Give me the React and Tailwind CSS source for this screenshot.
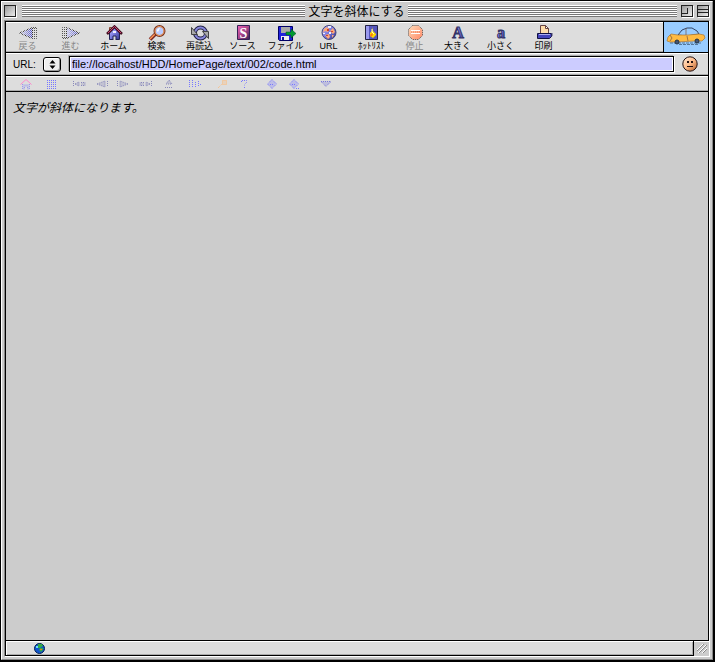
import React from "react";

const ja = "font-['Liberation_Sans','Noto_Sans_CJK_JP',sans-serif]";

// one pixel checkerboard and the gradients shared by the icons
function Patterns() {
  return (
    <svg className="absolute h-0 w-0" aria-hidden="true">
      <defs>
        <pattern id="dither" width="2" height="2" patternUnits="userSpaceOnUse">
          <rect width="1" height="1" fill="#ddd" />
          <rect x="1" y="1" width="1" height="1" fill="#ddd" />
        </pattern>
        <linearGradient id="arrowLeft">
          <stop offset="0" stopColor="#eef" />
          <stop offset="1" stopColor="#44c" />
        </linearGradient>
        <linearGradient id="arrowRight">
          <stop offset="0" stopColor="#ccf" />
          <stop offset="1" stopColor="#44c" />
        </linearGradient>
        <linearGradient id="blue" x2="1" y2="1">
          <stop offset="0" stopColor="#bbf" />
          <stop offset="0.5" stopColor="#77d" />
          <stop offset="1" stopColor="#338" />
        </linearGradient>
        <linearGradient id="plum" x2="1" y2="1">
          <stop offset="0" stopColor="#e6b" />
          <stop offset="0.5" stopColor="#a48" />
          <stop offset="1" stopColor="#325" />
        </linearGradient>
        <linearGradient id="red" x2="1" y2="1">
          <stop offset="0" stopColor="#fdb" />
          <stop offset="1" stopColor="#f86" />
        </linearGradient>
        <linearGradient id="skin" x2="1" y2="1">
          <stop offset="0" stopColor="#fed" />
          <stop offset="0.5" stopColor="#fb8" />
          <stop offset="1" stopColor="#a52" />
        </linearGradient>
      </defs>
    </svg>
  );
}

function Icon({ children, dither }) {
  return (
    <svg className="block h-4 w-5 shrink-0" viewBox="0 0 20 16" aria-hidden="true">
      {children}
      {dither && <rect width="20" height="16" fill="url(#dither)" shapeRendering="crispEdges" />}
    </svg>
  );
}

const tools = [
  {
    label: "戻る",
    off: true,
    dither: true,
    icon: (
      <>
        <path d="M1.500 8L14.500 2.500V13.500Z" fill="url(#arrowLeft)" stroke="#333" />
        <path d="M14 2.500h4.500v11H14M16.500 3v10" fill="none" stroke="#555" />
      </>
    ),
  },
  {
    label: "進む",
    off: true,
    dither: true,
    icon: (
      <>
        <path d="M18.500 8L5.500 2.500V13.500Z" fill="url(#arrowRight)" stroke="#333" />
        <path d="M6 2.500H1.500v11H6M3.500 3v10" fill="none" stroke="#555" />
      </>
    ),
  },
  {
    label: "ホーム",
    icon: (
      <>
        <path d="M5.500 2.500h2v4h-2z" fill="#db8" stroke="#843" />
        <path d="M5.500 8l5-5 5 5v6.500h-10z" fill="url(#blue)" stroke="#225" />
        <path d="M3 9L10.500 1.500 18 9" fill="none" stroke="#412" strokeWidth="2.500" />
        <path d="M4 8L10.500 1.500 17 8" fill="none" stroke="#c47" />
        <path d="M9 15v-4h3v4" fill="#ddd" stroke="#225" />
        <path d="M9 6h3v2H9z" fill="#eef" />
      </>
    ),
  },
  {
    label: "検索",
    icon: (
      <>
        <path d="M3 14.500L9 8.500" stroke="#722" strokeWidth="3.500" />
        <path d="M3 14L8.500 8.500" stroke="#f95" strokeWidth="1.500" />
        <circle cx="12.500" cy="6" r="5" fill="#bcf" stroke="#732" strokeWidth="2" />
        <circle cx="12.500" cy="6" r="4.500" fill="none" stroke="#fa6" />
        <path d="M10 6c0-2 1-3 3-3l-2 4z" fill="#fff" />
      </>
    ),
  },
  {
    label: "再読込",
    icon: (
      <>
        <circle cx="10.500" cy="8" r="5.500" fill="none" stroke="#224" strokeWidth="4" />
        <circle cx="10.500" cy="8" r="5.500" fill="none" stroke="#88d" strokeWidth="2" />
        <path d="M1.500 2.500v7h6z" fill="#aaa" stroke="#444" />
        <path d="M18.500 13.500v-7h-6z" fill="#aaa" stroke="#444" />
      </>
    ),
  },
  {
    label: "ソース",
    icon: (
      <>
        <path d="M4.500 0.500h12v14h-12z" fill="url(#plum)" stroke="#325" />
        <text x="10.500" y="12.500" fontSize="14" fontWeight="bold" textAnchor="middle" fill="#fff" className="font-['Liberation_Serif',serif]">
          S
        </text>
      </>
    ),
  },
  {
    label: "ファイル",
    icon: (
      <>
        <path d="M2.500 1.500h14v14h-13l-1-1z" fill="#22d" stroke="#006" />
        <path d="M5 2h9v6H5z" fill="#aaa" />
        <path d="M5 11h8v4H5z" fill="#eee" />
        <path d="M6 12h2v3H6z" fill="#119" />
        <path d="M10 7h5V4l5 4.500-5 4.500v-3h-5z" fill="#093" stroke="#042" strokeWidth="0.500" />
      </>
    ),
  },
  {
    label: "URL",
    icon: (
      <>
        <circle cx="10" cy="7.500" r="7" fill="url(#blue)" stroke="#447" />
        <path d="M5 4l3-2 2 2-1 3-3-1-2 2zM11 6l3-3 2 4-2 2zM6 10l4-1 1 3-2 2zM13 10h2l-2 3z" fill="#fa7" />
        <path d="M8 4h2v2H8zM12 6h2v1h-2zM7 10h2v1H7z" fill="#c43" />
        <path d="M9 1h3v2H9zM4 8h2v1H4zM10 7h2v2h-2z" fill="#eef" />
      </>
    ),
  },
  {
    label: "ﾎｯﾄﾘｽﾄ",
    icon: (
      <>
        <path d="M3.500 0.500h12v14h-12z" fill="#55b" stroke="#224" />
        <path d="M4 1h3v13H4z" fill="#99e" />
        <path d="M10 2l1 4 3 3v1l-3 3-3-2V8l2-2z" fill="#fd0" />
        <path d="M10 8l1 2-2 2-1-2z" fill="#f71" />
        <path d="M10 4v3l2 2" stroke="#ffb" fill="none" />
      </>
    ),
  },
  {
    label: "停止",
    off: true,
    icon: (
      <>
        <path d="M7.500 0.500h6l4 4v6l-4 4h-6l-4-4v-6z" fill="url(#red)" stroke="#555" strokeDasharray="1 1" />
        <path d="M6 5.500h9M6 8.500h9" stroke="#fff" />
        <path d="M6 7h9" stroke="#e75" strokeDasharray="1 1" />
      </>
    ),
  },
  {
    label: "大きく",
    icon: (
      <text x="10" y="13" fontSize="16" fontWeight="bold" textAnchor="middle" fill="url(#blue)" stroke="#336" className="font-['Liberation_Serif',serif]">
        A
      </text>
    ),
  },
  {
    label: "小さく",
    icon: (
      <text x="10" y="13" fontSize="16" fontWeight="bold" textAnchor="middle" fill="url(#blue)" stroke="#336" className="font-['Liberation_Serif',serif]">
        a
      </text>
    ),
  },
  {
    label: "印刷",
    icon: (
      <>
        <path d="M6.500 0.500h5l3 3v6h-8z" fill="#fda" stroke="#644" />
        <path d="M11.500 0.500v3h3z" fill="#fff" stroke="#644" />
        <path d="M3.500 8.500h14v3l-2 2h-12z" fill="#44b" stroke="#114" />
        <path d="M5 9h11v1H5z" fill="#aae" />
        <path d="M18 8v3" stroke="#447" />
      </>
    ),
  },
];

const marks = [
  { name: "Home", pos: "ml-[10px]", d: "M6.500 8v5h2v-3h3v3h2V8", roof: "M4.500 8.500l5.500-5 5.500 5", c: "#99e" },
  { name: "Index", pos: "ml-[5px]", d: "M6 4.500h9M6 6.500h9M6 8.500h9M6 10.500h9M6 12.500h9", c: "#77f" },
  { name: "First", pos: "ml-[8px]", d: "M4.500 5v6M6 8l4-2v4zM12 6.500h4v3h-4", c: "#88b" },
  { name: "Previous", pos: "ml-[3px]", d: "M5 8l8-3v6zM15.500 5v6", c: "#88b" },
  { name: "Next", pos: "ml-px", d: "M4.500 5v6M15 8L7 5v6z", c: "#88b" },
  { name: "Last", pos: "ml-[3px]", d: "M15.500 5v6M14 8l-4-2v4zM8 6.500H4v3h4", c: "#88b" },
  { name: "Up", pos: "ml-[3px]", d: "M10 4l3 4H7zM6 11.500h8", c: "#88b" },
  { name: "Title", pos: "ml-[6px]", d: "M4.500 4v8M7.500 4v8M10.500 6v5M13.500 5v6M15 8.500h2", c: "#77f" },
  { name: "Search", pos: "ml-[8px]", d: "M5 12l4-4M9.500 4.500h4v4h-4z", c: "#fb7" },
  { name: "Help", pos: "ml-px", d: "M7.500 6V4.500h5v2l-2 2v1M10.500 11v2", c: "#77f", line: true },
  { name: "Contents", pos: "ml-[8px]", d: "M10 3.500l4.500 4.500-4.500 4.500-4.500-4.500zM8 8.500h4", c: "#77f" },
  { name: "Glossary", pos: "ml-[2px]", d: "M10 3.500l4.500 4.500-4.500 4.500-4.500-4.500zM8 8.500h4M12 12.500h3", c: "#77f" },
  { name: "More", pos: "ml-[12px]", d: "M5 5.500h10l-5 5z", c: "#77d" },
];

function Mark({ mark }) {
  return (
    <Icon>
      <path
        d={mark.d}
        fill={mark.line ? "none" : mark.c}
        fillOpacity="0.300"
        stroke={mark.c}
        strokeDasharray="1 1"
      />
      {mark.roof && <path d={mark.roof} fill="none" stroke="#f8c" />}
    </Icon>
  );
}

function Stripes() {
  return (
    <div className="h-3 flex-1 bg-[repeating-linear-gradient(to_bottom,#fff_0px,#fff_1px,#777_1px,#777_2px)]" />
  );
}

function TitleBar() {
  const box =
    "h-3 w-3 shrink-0 border border-[#222] bg-linear-to-br from-[#999] to-[#eee] shadow-[1px_1px_0_#fff]";
  return (
    <header className="flex h-[18px] items-center pr-[3px] pl-[2px]">
      <div className="flex flex-1 items-center gap-[6px]">
        <button aria-label="Close" className={box} />
        <Stripes />
      </div>
      <h1 className="px-[3px] pt-px text-[12px] leading-4 whitespace-nowrap">文字を斜体にする</h1>
      <div className="flex flex-1 items-center gap-1">
        <Stripes />
        <button aria-label="Zoom" className={box}>
          <span className="block h-[6px] w-[6px] border-r border-b border-[#222]" />
        </button>
        <button aria-label="Collapse" className={box + " flex items-center"}>
          <span className="block h-[4px] w-full border-y border-[#222]" />
        </button>
      </div>
    </header>
  );
}

function Car() {
  return (
    <svg className="h-7 w-[42px]" viewBox="0 0 42 28" aria-hidden="true">
      <path d="M5 20h32M14 21.500h20" stroke="#579" strokeDasharray="3 1" />
      <path d="M13 12l4-5 5-2h5l5 3 2 3-12 2z" fill="#9cf" stroke="#346" />
      <path d="M2 18l1-4 3-3 7 1 10 0 11-1 5 1 1 3-3 3-7 0-19 1-6 0z" fill="#fb4" stroke="#a73" strokeWidth="0.700" />
      <path d="M21 5v7M5 12l2 3-2 3M22 13l1 5" stroke="#754" strokeWidth="0.700" fill="none" />
      <circle cx="12" cy="19" r="2" fill="#457" stroke="#234" />
      <circle cx="32" cy="18" r="2" fill="#457" stroke="#234" />
    </svg>
  );
}

const bar = "border-b border-b-black bg-[#ddd] shadow-[inset_0_1px_0_#fff,inset_0_-1px_0_#aaa]";

export default function App() {
  return (
    <div className={"min-h-screen bg-black pr-px pb-px text-black flex flex-col " + ja}>
      <Patterns />
      <div className="flex flex-1 flex-col border border-black bg-[#ccc]">
        <div className="flex flex-1 flex-col border border-t-white border-r-[#888] border-b-[#888] border-l-white">
          <TitleBar />
          <div className="mx-[2px] mb-[2px] flex flex-1 flex-col border border-t-[#888] border-r-white border-b-white border-l-[#888]">
            <div className="flex flex-1 flex-col border border-b-0 border-black">
              <nav className={"flex h-[31px] " + bar}>
                {tools.map((t) => (
                  <button
                    key={t.label}
                    disabled={t.off}
                    className="flex w-[43px] flex-col items-center pt-[3px] text-[9px] leading-[11px] whitespace-nowrap disabled:text-[#888]"
                  >
                    <Icon dither={t.dither}>{t.icon}</Icon>
                    {t.label}
                  </button>
                ))}
                <div className="ml-auto flex items-center border-l border-black bg-[#9cf] px-px">
                  <Car />
                </div>
              </nav>

              <form className={"flex h-[23px] items-center pr-[10px] pl-[7px] " + bar} onSubmit={(e) => e.preventDefault()}>
                <label htmlFor="url" className="w-[30px] pt-px text-[10px]">
                  URL:
                </label>
                <button
                  type="button"
                  aria-label="History"
                  className="flex h-[15px] w-[18px] items-center justify-center rounded-[3px] border border-black bg-[#eee] shadow-[inset_-1px_-1px_0_#999,inset_1px_1px_0_#fff]"
                >
                  <svg className="h-[9px] w-[7px]" viewBox="0 0 7 9" aria-hidden="true">
                    <path d="M3.500 0L6.500 3.500h-6zM3.500 9L6.500 5.500h-6z" />
                  </svg>
                </button>
                <input
                  id="url"
                  defaultValue="file://localhost/HDD/HomePage/text/002/code.html"
                  className="ml-[8px] h-4 min-w-0 flex-1 border border-black bg-[#ccf] px-[2px] text-[11px] shadow-[inset_0_0_0_1px_#fff,1px_1px_0_#fff,-1px_-1px_0_#aaa] outline-none"
                />
                <svg className="ml-2 h-4 w-4" viewBox="0 0 16 16" aria-hidden="true">
                  <circle cx="8" cy="8" r="7.200" fill="url(#skin)" stroke="#211" />
                  <path d="M5 5h2v2H5zM9 5h2v2H9zM5 10h6v1H5z" fill="#211" />
                </svg>
              </form>

              <div className={"flex h-4 items-center overflow-hidden " + bar}>
                {marks.map((m) => (
                  <button
                    key={m.name}
                    aria-label={m.name}
                    disabled
                    className={"flex h-3 w-5 shrink-0 items-center overflow-hidden " + m.pos}
                  >
                    <Mark mark={m} />
                  </button>
                ))}
              </div>

              <main className="flex-1 px-[7px] pt-2 text-[12px] leading-4">
                <em>文字が斜体になります。</em>
              </main>
            </div>

            <footer className="flex h-4 border-t border-l border-black">
              <div className="flex flex-1 items-center border-r border-b border-black bg-[#ddd] pl-7 shadow-[inset_1px_1px_0_#fff,inset_-1px_-1px_0_#aaa]">
                <svg className="h-[11px] w-[11px]" viewBox="0 0 11 11" aria-hidden="true">
                  <circle cx="5.500" cy="5.500" r="5" fill="#15c" stroke="#025" />
                  <path d="M4 1h4l1 2-3 2H4zM6 5h3v2L7 9 5 7z" fill="#3a4" />
                  <path d="M2 3h2v2H2z" fill="#6df" />
                  <path d="M6 6h2v1H6z" fill="#e72" />
                </svg>
              </div>
              <div className="flex w-[15px] items-center justify-center border-t border-white">
                <svg className="h-3 w-3" viewBox="0 0 12 12" aria-hidden="true">
                  <path d="M1 7l6-6M2 10l8-8M6 10l5-5" stroke="#fff" />
                  <path d="M1 8l7-7M3 10l8-8M7 10l4-4" stroke="#888" />
                </svg>
              </div>
            </footer>
          </div>
        </div>
      </div>
    </div>
  );
}
